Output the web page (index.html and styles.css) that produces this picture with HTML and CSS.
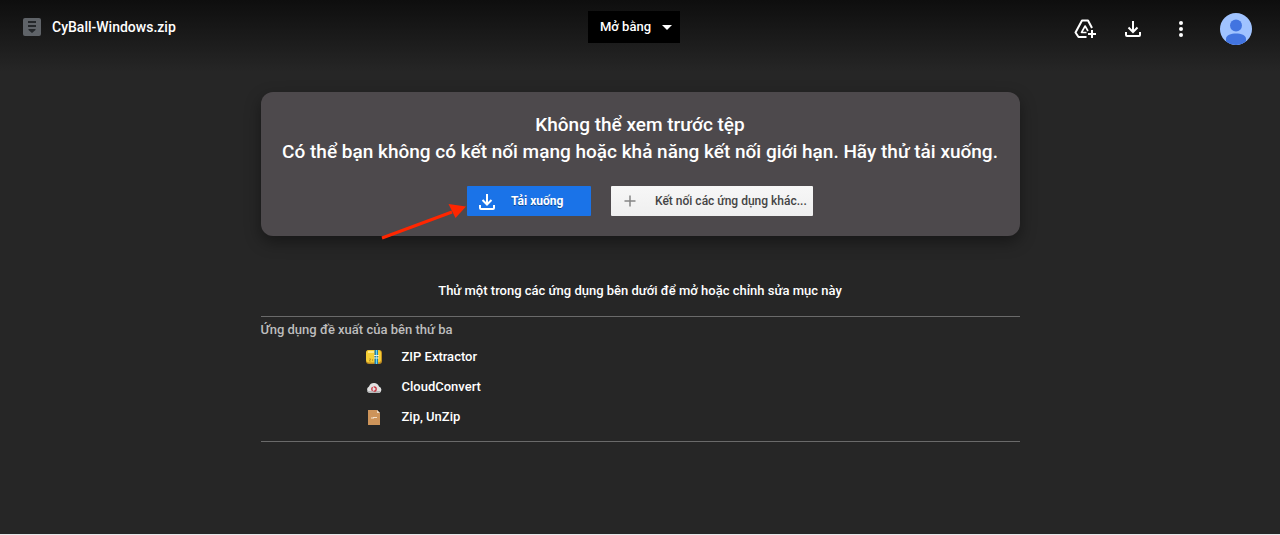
FILE: index.html
```html
<!DOCTYPE html>
<html lang="vi">
<head>
<meta charset="utf-8">
<meta name="viewport" content="width=device-width, initial-scale=1">
<title>CyBall-Windows.zip</title>
<link rel="stylesheet" href="styles.css">
</head>
<body>
<header class="toolbar">
  <div class="file">
    <svg class="file-icon" viewBox="0 0 18 18" aria-hidden="true"><rect width="18" height="18" rx="2" fill="#5f6368"/><path d="M5 3h8v2H5zM5 7h8v2H5zM5.500 11h7v1L9 15l-3.500-3z" fill="#24272a"/></svg>
    <h1 class="file-name">CyBall-Windows.zip</h1>
  </div>
  <button class="open-with" type="button">Mở bằng
    <svg class="caret" viewBox="0 0 10 5" aria-hidden="true"><path d="M0 0h10L5 5z" fill="#fff"/></svg>
  </button>
  <div class="actions">
    <button class="icon-button" type="button" aria-label="Thêm lối tắt vào Drive">
      <svg class="icon" viewBox="0 0 24 24" fill="none" stroke="#fff" stroke-width="2" stroke-linejoin="round" aria-hidden="true"><path d="M13.500 20H5.500L2.500 15.500 9 3.500h6l4 7.500"/><path d="M13.500 15.500H8.500l3.600-6.500 2.900 5" stroke-width="1.600"/><path d="M19 13v8M15 17h8"/></svg>
    </button>
    <button class="icon-button" type="button" aria-label="Tải xuống">
      <svg class="icon" viewBox="0 0 24 24" fill="none" stroke="#fff" stroke-width="2" aria-hidden="true"><path d="M12 4v11M7.500 10.500L12 15l4.500-4.500M5 15v3q0 1 1 1h12q1 0 1-1v-3"/></svg>
    </button>
    <button class="icon-button" type="button" aria-label="Thao tác khác">
      <svg class="icon" viewBox="0 0 24 24" fill="#fff" aria-hidden="true"><circle cx="12" cy="6" r="2"/><circle cx="12" cy="12" r="2"/><circle cx="12" cy="18" r="2"/></svg>
    </button>
    <button class="avatar" type="button" aria-label="Tài khoản">
      <svg class="avatar-image" viewBox="0 0 32 32" aria-hidden="true"><circle cx="16" cy="16" r="16" fill="#a0c3ff"/><circle cx="16" cy="12.500" r="6" fill="#4274e0"/><path d="M6 28.500V26c0-4 5-5.500 10-5.500S26 22 26 26v2.500A16 16 0 0 1 6 28.500z" fill="#4274e0"/></svg>
    </button>
  </div>
</header>
<main class="content">
  <section class="card">
    <p class="message">Không thể xem trước tệp<br>Có thể bạn không có kết nối mạng hoặc khả năng kết nối giới hạn. Hãy thử tải xuống.</p>
    <div class="buttons">
      <button class="button primary" type="button">
        <svg class="button-icon" viewBox="0 0 20 20" fill="none" stroke="#fff" stroke-width="2" aria-hidden="true"><path d="M10 3v10M5.500 9L10 13.500 14.500 9M3 14v3q0 1 1 1h12q1 0 1-1v-3"/></svg>
        Tải xuống
      </button>
      <button class="button secondary" type="button">
        <svg class="button-icon" viewBox="0 0 20 20" fill="none" stroke="#858585" stroke-width="1.500" aria-hidden="true"><path d="M9 4.500v11M3.500 10h11"/></svg>
        Kết nối các ứng dụng khác...
      </button>
    </div>
    <svg class="arrow" viewBox="0 0 88 36" aria-hidden="true"><path d="M1 34L71 8" stroke="#ff2600" stroke-width="3"/><path d="M67.500 0L85 2.500 74.500 14z" fill="#ff2600"/></svg>
  </section>
  <p class="hint">Thử một trong các ứng dụng bên dưới để mở hoặc chỉnh sửa mục này</p>
  <section class="apps">
    <h2 class="apps-title">Ứng dụng đề xuất của bên thứ ba</h2>
    <ul class="app-list">
      <li><a class="app" href="#">
        <svg class="app-icon" viewBox="0 0 16 16" aria-hidden="true"><rect y="1" width="16" height="14" rx="3" fill="#c18d20"/><rect y="1" width="15" height="12.500" rx="3" fill="#f5ce35"/><path d="M2 3h6" stroke="#ffe989" stroke-width="2"/><path d="M8.500 1h3.500v14H8.500z" fill="#257fae"/><path d="M10 1h1v14h-1z" fill="#62d5f5"/><path d="M8 6.500h5M8 9h5" stroke="#f3eddc"/><path d="M3 10h2l-2 2h2M6.500 10v2" stroke="#a98029" stroke-width=".6" fill="none"/></svg>
        ZIP Extractor</a></li>
      <li><a class="app" href="#">
        <svg class="app-icon" viewBox="0 0 16 16" aria-hidden="true"><path d="M4 14a3.500 3.500 0 0 1-1-6.600A5.300 5.300 0 0 1 13 7.500 3.400 3.400 0 0 1 13 14z" fill="#e1e1e1"/><path d="M1 12h14q-.8 2-2.500 2H4q-2.500 0-3-2" fill="#b8b8b8"/><circle cx="8" cy="10" r="2.200" fill="none" stroke="#c82f3b" stroke-width="1.300" stroke-dasharray="3.500 1"/></svg>
        CloudConvert</a></li>
      <li><a class="app" href="#">
        <svg class="app-icon" viewBox="0 0 16 16" aria-hidden="true"><path d="M2 1h9l3 3v12H2z" fill="#cd945a"/><path d="M11 1l3 3h-3z" fill="#f0dac2"/><path d="M5 9h3M7 8.500h4" stroke="#f3dfc8"/></svg>
        Zip, UnZip</a></li>
    </ul>
  </section>
</main>
</body>
</html>
```
FILE: styles.css
```css
* {
  box-sizing: border-box;
}

body {
  margin: 0;
  min-height: 100vh;
  background: linear-gradient(#0e0e0e, #262626 72px) #262626;
  border-bottom: 1px solid #e8e6e8;
  color: #fff;
  font-family: Roboto, "Noto Sans", sans-serif;
  font-size: 13px;
  line-height: 20px;
}

h1, h2, p, ul {
  margin: 0;
  padding: 0;
}

button {
  margin: 0;
  border: 0;
  color: inherit;
  font: inherit;
  cursor: pointer;
}

svg {
  display: block;
  flex: none;
}

.toolbar {
  display: grid;
  grid-template-columns: 1fr auto 1fr;
  align-items: start;
  padding: 11px 28px 0 23px;
}

.file {
  display: flex;
  align-items: center;
  gap: 11px;
  height: 32px;
}

.file-icon {
  width: 18px;
  height: 18px;
}

.file-name {
  font-size: 14px;
  font-weight: 500;
}

.open-with {
  display: flex;
  align-items: center;
  gap: 11px;
  height: 32px;
  margin-right: 7px;
  padding: 0 8px 0 12px;
  background: #000;
  font-weight: 500;
}

.caret {
  width: 10px;
  height: 5px;
}

.actions {
  display: flex;
  justify-content: flex-end;
  align-items: center;
  gap: 24px;
  padding-top: 2px;
}

.icon-button {
  padding: 0;
  background: none;
}

.icon {
  width: 24px;
  height: 24px;
}

.avatar {
  margin-left: 3px;
  padding: 0;
  border-radius: 50%;
  background: none;
}

.avatar-image {
  width: 32px;
  height: 32px;
}

.content {
  max-width: 759px;
  margin: 0 auto;
  padding: 47px 0 32px;
}

.card {
  position: relative;
  padding: 19px 12px 20px;
  border-radius: 12px;
  background: #4d494c;
  box-shadow: 0 6px 16px rgba(0, 0, 0, 0.4);
  text-align: center;
}

.message {
  font-size: 19px;
  font-weight: 500;
  line-height: 27px;
}

.buttons {
  display: flex;
  flex-wrap: wrap;
  justify-content: center;
  gap: 20px;
  margin-top: 21px;
}

.button {
  display: flex;
  align-items: center;
  gap: 14px;
  height: 30px;
  padding: 0 6px 0 10px;
  border-radius: 1px;
  font-size: 12px;
  font-weight: 700;
}

.primary {
  min-width: 124px;
  background: #1a73e8;
  text-shadow: 0 1px rgba(0, 0, 0, 0.4);
}

.secondary {
  min-width: 202px;
  background: linear-gradient(#f7f7f7, #efefef);
  color: #444;
  font-weight: 500;
}

.button-icon {
  width: 20px;
  height: 20px;
}

.arrow {
  position: absolute;
  right: calc(50% + 171px);
  bottom: -4px;
  width: 88px;
  height: 36px;
}

.hint {
  margin-top: 45px;
  font-weight: 500;
  text-align: center;
}

.apps {
  margin-top: 15px;
  padding: 3px 0 14px;
  border-top: 1px solid #6a6a6a;
  border-bottom: 1px solid #6a6a6a;
}

.apps-title {
  color: #bdbdbd;
  font-size: 13px;
  font-weight: 500;
}

.app-list {
  display: grid;
  gap: 10px;
  margin-top: 7px;
  padding-left: 105px;
  list-style: none;
}

.app {
  display: flex;
  align-items: center;
  gap: 20px;
  width: fit-content;
  color: inherit;
  font-weight: 500;
  text-decoration: none;
}

.app-icon {
  width: 16px;
  height: 16px;
}
```
